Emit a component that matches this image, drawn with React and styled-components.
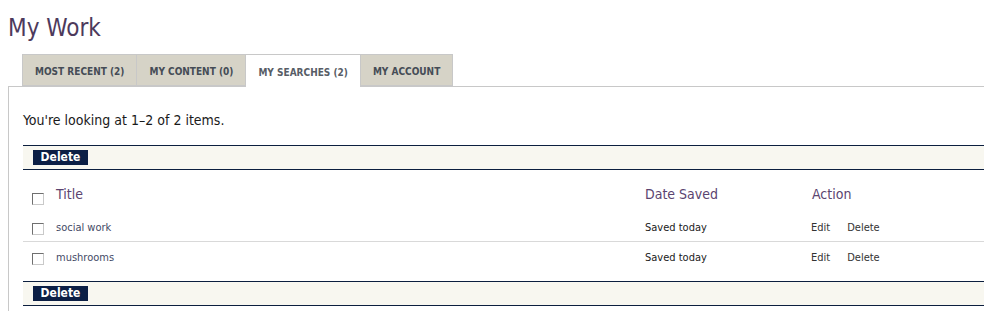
import React from "react";
import styled, { createGlobalStyle } from "styled-components";

const Global = createGlobalStyle`
  html, body { margin: 0; padding: 0; background: #fff; }
  body { font-family: Tahoma, "DejaVu Sans Condensed", "DejaVu Sans", sans-serif; color: #222; }
`;

const Page = styled.div`
  padding: 0 0 0 8px;
`;

const Heading = styled.h1`
  margin: 0;
  padding-top: 14px;
  height: 54px;
  box-sizing: border-box;
  font-size: 24px;
  font-weight: normal;
  line-height: 28px;
  color: #4d3a5c;
`;

const Tabs = styled.ul`
  display: flex;
  list-style: none;
  margin: 0;
  padding: 0 0 0 14px;
  height: 32px;
`;

const Tab = styled.li`
  box-sizing: border-box;
  height: ${(p) => (p.$active ? 33 : 32)}px;
  display: flex;
  align-items: center;
  padding: 2px 12px 0;
  border: 1px solid #c8c8c8;
  border-left-width: ${(p) => (p.$first ? 1 : 0)}px;
  border-bottom: ${(p) => (p.$active ? "none" : "1px solid #c8c8c8")};
  background: ${(p) => (p.$active ? "#fff" : "#d6d3c7")};
  color: ${(p) => (p.$active ? "#575d66" : "#454c56")};
  font-size: 10px;
  font-weight: bold;
  text-transform: uppercase;
  white-space: nowrap;
  position: relative;
  z-index: 1;
`;

const Panel = styled.div`
  border-top: 1px solid #c8c8c8;
  border-left: 1px solid #c8c8c8;
  padding: 23px 0 20px 14px;
`;

const Summary = styled.p`
  margin: 0 0 15px 0;
  font-size: 14px;
  line-height: 20px;
  color: #1a1a1a;
`;

const ActionBar = styled.div`
  display: flex;
  align-items: center;
  height: 23px;
  padding-left: 10px;
  background: #f8f7f0;
  border-top: 1px solid #0c1f3f;
  border-bottom: 1px solid #0c1f3f;
`;

const BarButton = styled.button`
  border: none;
  margin: 0;
  padding: 0;
  height: 15px;
  width: 55px;
  background: #0c1f45;
  color: #fff;
  font-family: inherit;
  font-size: 12px;
  font-weight: bold;
  line-height: 15px;
  cursor: pointer;
`;

const Row = styled.div`
  display: grid;
  grid-template-columns: 33px 589px 166px 1fr;
  align-items: center;
  box-sizing: border-box;
  height: ${(p) => (p.$head ? 42 : 30)}px;
  padding-top: ${(p) => (p.$head ? 6 : 1)}px;
  border-bottom: ${(p) => (p.$divider ? "1px solid #d9d9d9" : "none")};
`;

const Rows = styled.div`
  margin-bottom: 9px;
`;

const Check = styled.input.attrs({ type: "checkbox" })`
  appearance: none;
  margin: ${(p) => (p.$head ? "10px" : "3px")} 0 0 9px;
  width: 12px;
  height: 12px;
  box-sizing: border-box;
  border-top: 1px solid #6f6f6f;
  border-left: 1px solid #6f6f6f;
  border-right: 1px solid #c9c9c9;
  border-bottom: 1px solid #c9c9c9;
  background: #fff;
`;

const HeadCell = styled.div`
  font-size: 14px;
  color: #5b4470;
  padding-left: ${(p) => p.$pad || 0}px;
`;

const Cell = styled.div`
  font-size: 11px;
  color: ${(p) => p.$color || "#1a1a1a"};
  padding-left: ${(p) => p.$pad || 0}px;
  display: flex;
  gap: 17px;
`;

const tabs = [
  { label: "Most Recent (2)" },
  { label: "My Content (0)" },
  { label: "My Searches (2)", active: true },
  { label: "My Account" },
];

const searches = ["social work", "mushrooms"];

export default function App() {
  return (
    <Page>
      <Global />
      <Heading>My Work</Heading>
      <Tabs>
        {tabs.map((t, i) => (
          <Tab key={t.label} $active={t.active} $first={i === 0}>
            {t.label}
          </Tab>
        ))}
      </Tabs>
      <Panel>
        <Summary>You're looking at 1–2 of 2 items.</Summary>
        <ActionBar>
          <BarButton>Delete</BarButton>
        </ActionBar>
        <Rows>
          <Row $head>
            <Check $head />
            <HeadCell>Title</HeadCell>
            <HeadCell>Date Saved</HeadCell>
            <HeadCell $pad={1}>Action</HeadCell>
          </Row>
          {searches.map((s, i) => (
            <Row key={s} $divider={i < searches.length - 1}>
              <Check />
              <Cell $color="#444a66" $pad={-1}>{s}</Cell>
              <Cell>Saved today</Cell>
              <Cell $color="#333">
                <span>Edit</span>
                <span>Delete</span>
              </Cell>
            </Row>
          ))}
        </Rows>
        <ActionBar>
          <BarButton>Delete</BarButton>
        </ActionBar>
      </Panel>
    </Page>
  );
}
